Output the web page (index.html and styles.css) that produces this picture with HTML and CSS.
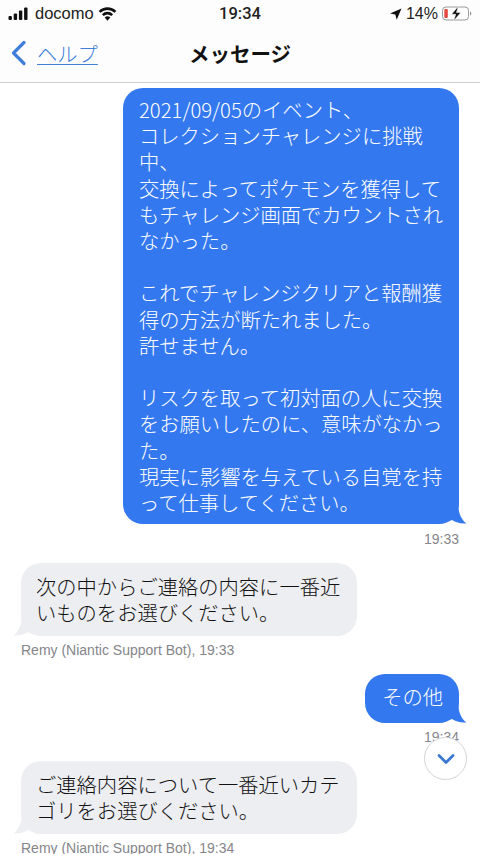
FILE: index.html
```html
<!DOCTYPE html>
<html lang="ja">
<head>
<meta charset="utf-8">
<title>メッセージ</title>
<link rel="stylesheet" href="styles.css">
</head>
<body>
<div class="phone">
  <header class="status">
    <div class="status-left">
      <svg class="signal" width="21" height="13" viewBox="0 0 20 13"><rect x="0" y="9" width="3.4" height="4" rx="1"/><rect x="5.2" y="6.5" width="3.4" height="6.5" rx="1"/><rect x="10.4" y="3.5" width="3.4" height="9.5" rx="1"/><rect x="15.6" y="0.5" width="3.4" height="12.5" rx="1"/></svg>
      <span>docomo</span>
      <svg class="wifi" width="19" height="14" viewBox="0 0 19 14"><path class="arc" d="M1.600 4.900A11.200 11.200 0 0 1 17.400 4.900"/><path class="arc" d="M4.800 8.100A6.700 6.700 0 0 1 14.200 8.100"/><path d="M9.500 13.800 6.700 10.500a4 4 0 0 1 5.600 0z"/></svg>
    </div>
    <div class="status-time">19:34</div>
    <div class="status-right">
      <svg class="loc" width="12" height="12" viewBox="0 0 12 12"><path d="M11.500.5 0 5.600l5.300.9 1.400 5.200z"/></svg>
      <span>14%</span>
      <svg class="battery" width="30" height="15" viewBox="0 0 30 15"><rect x=".5" y="1" width="26" height="13" rx="3.500" fill="none" stroke="#9a9a9a"/><rect x="2.300" y="3" width="3.500" height="9" rx="1" fill="#e0493f"/><path d="M28 5.500c1 .4 1.300 1.200 1.300 2s-.3 1.600-1.300 2z" fill="#9a9a9a"/><path d="M16.500 0 9.500 8.300h4.200L11.600 15l7.300-8.600h-4.400z" fill="#111" stroke="#fff" stroke-width=".6"/></svg>
    </div>
  </header>
  <nav class="nav">
    <a class="back">
      <svg width="17" height="26" viewBox="0 0 17 26"><path d="M14 2.500 3.500 13 14 23.500" fill="none" stroke="#3f7fd9" stroke-width="3.200" stroke-linecap="round" stroke-linejoin="round"/></svg>
      <span class="back-label">ヘルプ</span>
    </a>
    <h1 class="title">メッセージ</h1>
  </nav>
  <main class="thread">
    <div class="msg out first">
      <div class="bubble pad-a">2021/09/05のイベント、<br>コレクションチャレンジに挑戦<br>中、<br>交換によってポケモンを獲得して<br>もチャレンジ画面でカウントされ<br>なかった。<br><br>これでチャレンジクリアと報酬獲<br>得の方法が断たれました。<br>許せません。<br><br>リスクを取って初対面の人に交換<br>をお願いしたのに、意味がなかっ<br>た。<br>現実に影響を与えている自覚を持<br>って仕事してください。<svg class="tail" width="20" height="20" viewBox="0 0 20 20"><path d="M0 0h9c.5 8 2.500 15 8.500 19.500C11 20 7 18.500 3 16L0 17z"/></svg></div>
      <div class="meta">19:33</div>
    </div>
    <div class="msg in">
      <div class="bubble pad-b">次の中からご連絡の内容に一番近<br>いものをお選びください。<svg class="tail" width="20" height="20" viewBox="0 0 20 20"><path d="M20 0h-9c-.5 8-2.500 15-8.500 19.500C9 20 13 18.500 17 16l3 1z"/></svg></div>
      <div class="meta">Remy (Niantic Support Bot), 19:33</div>
    </div>
    <div class="msg out">
      <div class="bubble pad-c">その他<svg class="tail" width="20" height="20" viewBox="0 0 20 20"><path d="M0 0h9c.5 8 2.500 15 8.500 19.500C11 20 7 18.500 3 16L0 17z"/></svg></div>
      <div class="meta">19:34</div>
    </div>
    <div class="msg in">
      <div class="bubble pad-b">ご連絡内容について一番近いカテ<br>ゴリをお選びください。<svg class="tail" width="20" height="20" viewBox="0 0 20 20"><path d="M20 0h-9c-.5 8-2.500 15-8.500 19.500C9 20 13 18.500 17 16l3 1z"/></svg></div>
      <div class="meta">Remy (Niantic Support Bot), 19:34</div>
    </div>
  </main>
  <button class="scroll-down" aria-label="下へ">
    <svg width="18" height="12" viewBox="0 0 18 12"><path d="M2 2.500 9 9.500l7-7" fill="none" stroke="#3a78d4" stroke-width="2.800" stroke-linecap="round" stroke-linejoin="round"/></svg>
  </button>
</div>
</body>
</html>
```
FILE: styles.css
```css
* { box-sizing: border-box; }
html, body { margin: 0; padding: 0; background: #fff; }
body {
  font-family: "Liberation Sans", "Noto Sans CJK JP", sans-serif;
  color: #111;
}
.phone {
  position: relative;
  width: 480px;
  height: 854px;
  overflow: hidden;
  background: #fff;
}
.status {
  height: 27px;
  padding: 0 8px;
  display: grid;
  grid-template-columns: 1fr auto 1fr;
  align-items: center;
  font-size: 16.500px;
  color: #222;
  background: #fdfdfd;
}
.status-left { display: flex; align-items: center; gap: 6px; }
.wifi { position: relative; left: -2px; }
.wifi .arc { fill: none; stroke: #111; stroke-width: 2.600; }
.signal, .wifi, .loc { fill: #111; }
.status-time { font-family: Roboto, sans-serif; font-size: 16.500px; font-weight: 500; }
.status-right { display: flex; align-items: center; justify-content: flex-end; gap: 4px; font-size: 16px; }
.nav {
  position: relative;
  height: 56px;
  display: flex;
  align-items: center;
  justify-content: center;
  background: #fdfdfd;
  border-bottom: 1px solid #cfcfcf;
}
.back {
  position: absolute;
  left: 10px;
  top: 13px;
  display: flex;
  align-items: center;
  gap: 10px;
  color: #3f7fd9;
}
.back-label {
  font-family: "Noto Sans CJK JP", sans-serif;
  font-size: 20.300px;
  line-height: 26px;
  font-weight: 300;
  text-decoration: underline;
  text-underline-offset: 2px;
  text-decoration-thickness: 1px;
}
.title {
  margin: 0;
  font-family: "Noto Sans CJK JP", sans-serif;
  font-size: 20.500px;
  font-weight: 700;
  line-height: 26px;
  position: relative;
  top: -2px;
}
.thread { padding: 5px 21px 0; display: flex; flex-direction: column; }
.msg { display: flex; flex-direction: column; margin-bottom: 16px; }
.msg.out { align-items: flex-end; }
.msg.in { align-items: flex-start; }
.bubble {
  position: relative;
  font-family: "Noto Sans CJK JP", sans-serif;
  font-size: 20.300px;
  font-weight: 300;
  line-height: 26.200px;
  border-radius: 20px;
  white-space: nowrap;
}
.msg.out .bubble { background: #3478f0; color: #fff; }
.msg.in .bubble { background: #edeef2; color: #111; }
.pad-a { width: 336px; padding: 8px 16px 9px; }
.pad-b { width: 336px; padding: 10px 15px 10.600px; }
.pad-c { padding: 9px 16px 13.800px 17px; }
.tail { position: absolute; bottom: 0; }
.msg.out .tail { right: -10px; fill: #3478f0; }
.msg.in .tail { left: -10px; fill: #edeef2; }
.meta {
  font-size: 14px;
  line-height: 16px;
  color: #85858a;
  margin-top: 6px;
}
.first .meta { margin-top: 7px; }
.scroll-down {
  position: absolute;
  left: 424px;
  top: 737px;
  width: 43px;
  height: 43px;
  padding: 0;
  border-radius: 50%;
  border: 1px solid #d4d4d6;
  background: rgba(255, 255, 255, 0.96);
  display: flex;
  align-items: center;
  justify-content: center;
}
```
